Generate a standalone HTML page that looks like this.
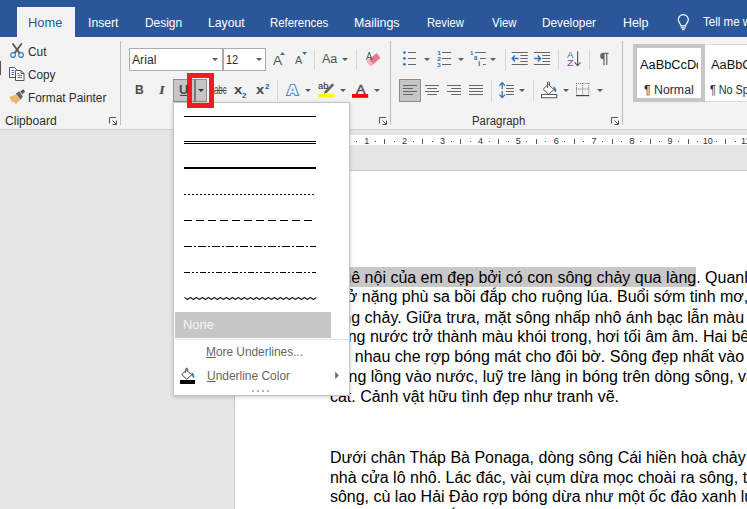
<!DOCTYPE html>
<html lang="vi"><head><meta charset="utf-8"><title>Word</title>
<style>
html,body{margin:0;padding:0}
body{width:747px;height:509px;overflow:hidden;position:relative;background:#e6e6e6;font-family:"Liberation Sans",sans-serif}
.a{position:absolute}
.t{position:absolute;white-space:nowrap;transform-origin:0 0;line-height:1}
.sep{position:absolute;width:1px;background:#d4d4d4}
.gsep{position:absolute;width:1px;background:#bdbdbd;top:41px;height:84px}
.doc{position:absolute;left:329.9px;white-space:nowrap;font-size:16px;line-height:20px;color:#000;height:20px}
svg{position:absolute;overflow:visible}
.arr{position:absolute;width:0;height:0;border-left:3px solid transparent;border-right:3px solid transparent;border-top:3.4px solid #5a5a5a;margin-left:-0.5px}
.rn{position:absolute;top:136.9px;width:20px;text-align:center;font-size:9px;line-height:9px;color:#333}
.rd{position:absolute;top:141px;width:1px;height:1px;background:#444}
.rt{position:absolute;top:139.2px;width:1px;height:4.5px;background:#555}
</style></head><body>

<!-- title / tab bar -->
<div class="a" style="left:0;top:0;width:747px;height:37px;background:#2b579a"></div>
<div class="a" style="left:17px;top:7px;width:58px;height:30px;background:#f3f3f3"></div>
<!-- ribbon -->
<div class="a" style="left:0;top:37px;width:747px;height:91.5px;background:#f3f3f3;border-bottom:1px solid #d0d0d0"></div>
<div class="a" style="left:0;top:61px;width:1px;height:14px;background:#555"></div>

<div class="gsep" style="left:120px"></div>
<div class="gsep" style="left:390px"></div>
<div class="gsep" style="left:622px"></div>

<!-- font boxes -->
<div class="a" style="left:129px;top:48px;width:93.5px;height:22.5px;background:#fff;border:1px solid #ababab;box-sizing:border-box"></div>
<div class="a" style="left:223.3px;top:48px;width:42.7px;height:22.5px;background:#fff;border:1px solid #ababab;box-sizing:border-box"></div>
<div class="arr" style="left:212.5px;top:58px"></div>
<div class="arr" style="left:256px;top:58px"></div>

<!-- U button -->
<div class="a" style="left:173.4px;top:79px;width:33.6px;height:23px;background:#c6c6c6;border:1px solid #8e8e8e;box-sizing:border-box"></div>
<div class="a" style="left:194.2px;top:79px;width:1.7px;height:23px;background:#7c7c7c"></div>
<div class="a" style="left:179.6px;top:95px;width:7.6px;height:1px;background:#444"></div>
<div class="arr" style="left:198.3px;top:89px;border-top-color:#333"></div>

<!-- row separators -->
<div class="sep" style="left:314px;top:49px;height:21px"></div>
<div class="sep" style="left:356px;top:49px;height:21px"></div>
<div class="sep" style="left:277px;top:80px;height:21px"></div>
<div class="sep" style="left:504.5px;top:49px;height:21px"></div>
<div class="sep" style="left:557.5px;top:49px;height:21px"></div>
<div class="sep" style="left:588.5px;top:49px;height:21px"></div>
<div class="sep" style="left:491px;top:80px;height:21px"></div>
<div class="sep" style="left:533px;top:80px;height:21px"></div>

<!-- small arrows -->
<div class="arr" style="left:342px;top:58px"></div>
<div class="arr" style="left:305px;top:89px"></div>
<div class="arr" style="left:340px;top:89px"></div>
<div class="arr" style="left:374.5px;top:89px"></div>
<div class="arr" style="left:424px;top:58px"></div>
<div class="arr" style="left:458px;top:58px"></div>
<div class="arr" style="left:490px;top:58px"></div>
<div class="arr" style="left:519px;top:89px"></div>
<div class="arr" style="left:563px;top:89px"></div>
<div class="arr" style="left:597px;top:89px"></div>

<!-- align-left button -->
<div class="a" style="left:399px;top:79px;width:22px;height:23px;background:#c6c6c6;border:1px solid #8c8c8c;box-sizing:border-box"></div>

<svg width="747" height="509" viewBox="0 0 747 509" style="left:0;top:0" fill="none">
<!-- lightbulb -->
<g stroke="#fff" stroke-width="1.2" fill="none">
<path d="M680.9 25.8 C680.9 23.4 678.3 22.6 678.3 19.7 A5 5 0 0 1 688.3 19.7 C688.3 22.6 685.7 23.4 685.7 25.8 Z"/>
<path d="M680.9 27.8 H685.7 M682 29.7 H684.6"/>
</g>
<!-- scissors -->
<g stroke="#5c5c5c" stroke-width="1.9" stroke-linecap="round"><path d="M12.9 44 L19.2 52.6 M21.3 44 L15 52.6"/></g>
<g stroke="#3b78c4" stroke-width="1.2"><circle cx="13.1" cy="55" r="2.3"/><circle cx="21.1" cy="55" r="2.3"/></g>
<!-- copy -->
<g stroke="#555" stroke-width="1" fill="#fff">
<path d="M9.5 67.5 H14.5 L16.5 69.5 V77.5 H9.5 Z"/>
<path d="M15.5 70.5 H21 L24 73.5 V80.5 H15.5 Z"/>
<path d="M21 70.5 V73.5 H24" fill="none"/>
</g>
<g stroke="#3b78c4" stroke-width="1"><path d="M11.5 70.5 H14 M11.5 72.5 H14 M11.5 74.5 H14 M17.5 73.5 H19.5 M17.5 75.5 H22 M17.5 77.5 H22"/></g>
<!-- format painter -->
<path d="M9.3 97.3 L16.2 94.2 L20.8 99.6 L16 104 L13.6 101.8 L12.6 102.6 Z" fill="#e9b86c"/>
<path d="M15.8 93.6 L19.4 91.2 L22.9 96.4 L20.6 99.4 Z" fill="#666"/>
<path d="M20.3 91.3 L23.4 89.3 L25.2 91.9 L22.2 94 Z" fill="#555"/>
<!-- dialog launchers -->
<g stroke="#555" stroke-width="1" fill="none">
<path id="dl" d="M109.5 123.5 V117.5 H116 M112.5 120.5 L116 124 M116.5 120.5 V124.5 H112.5"/>
<path d="M379.5 123.5 V117.5 H386 M382.5 120.5 L386 124 M386.5 120.5 V124.5 H382.5"/>
<path d="M611.5 123.5 V117.5 H618 M614.5 120.5 L618 124 M618.5 120.5 V124.5 H614.5"/>
</g>
<!-- grow/shrink triangles -->
<path d="M280 55 L282.5 52 L285 55 Z" fill="#2e75b6"/>
<path d="M302.2 52 L307 52 L304.6 55 Z" fill="#2e75b6"/>
<!-- eraser -->
<g transform="rotate(-40 373.5 59.5)">
<rect x="367" y="56.5" width="13" height="6.4" rx="1" fill="#e8798c"/>
<rect x="367" y="56.5" width="3.2" height="6.4" rx="1" fill="#f4b6c0"/>
</g>
<!-- highlighter -->
<path d="M333.2 84.3 L325.4 92.4" stroke="#666" stroke-width="2.7" stroke-linecap="butt"/>
<path d="M325.6 90.6 L323.6 93.8 L327.2 92.6 Z" fill="#555"/>
<rect x="318" y="94" width="16.2" height="3.8" fill="#ffff00"/>
<!-- font color bar -->
<rect x="352" y="94" width="16.2" height="3.8" fill="#ff0000"/>
<!-- bullets -->
<g fill="#2e75b6"><circle cx="404.4" cy="52.5" r="1.35"/><circle cx="404.4" cy="58.4" r="1.35"/><circle cx="404.4" cy="64.3" r="1.35"/></g>
<g stroke="#666" stroke-width="1"><path d="M408 52.5 H416 M408 58.5 H416 M408 64.5 H416"/>
<!-- numbering lines -->
<path d="M442 52.5 H451.2 M442 58.5 H451.2 M442 64.5 H451.2"/>
<!-- multilevel lines -->
<path d="M475.2 52.5 H485.8 M480 58.5 H485.8 M483 64.5 H485.8"/>
<!-- indent lines -->
<path d="M511.7 52.5 H527.8 M520.3 55.5 H527.8 M520.3 58.5 H527.8 M520.3 61.5 H527.8 M511.7 64.5 H527.8"/>
<path d="M533.9 52.5 H550 M542.3 55.5 H550 M542.3 58.5 H550 M542.3 61.5 H550 M533.9 64.5 H550"/>
<!-- align icons -->
<path d="M403 85.5 H417 M403 88.5 H413 M403 91.5 H417 M403 94.5 H413"/>
<path d="M425 85.5 H439 M427.2 88.5 H436.9 M425 91.5 H439 M427.2 94.5 H436.9"/>
<path d="M447 85.5 H461 M451.2 88.5 H461 M447 91.5 H461 M451.2 94.5 H461"/>
<path d="M469 85.5 H483 M469 88.5 H483 M469 91.5 H483 M469 94.5 H483"/>
<!-- line spacing lines -->
<path d="M506 85.5 H514 M506 88.5 H514 M506 91.5 H514 M506 94.5 H514"/>
</g>
<!-- indent arrows -->
<g stroke="#2e75b6" stroke-width="1.4" fill="none"><path d="M512.2 58.5 H518.6 M515 55.6 L512.2 58.5 L515 61.4"/><path d="M534.2 58.5 H540.6 M537.8 55.6 L540.6 58.5 L537.8 61.4"/></g>
<!-- sort arrow -->
<g stroke="#555" stroke-width="1.1" fill="none"><path d="M577.6 51.2 V65.4 M574.6 62.4 L577.6 65.6 L580.6 62.4"/></g>
<!-- line spacing arrows -->
<g stroke="#2e75b6" stroke-width="1.3" fill="none"><path d="M502.2 82.8 V89.2 M502.2 91 V97.4 M499.4 85.6 L502.2 82.6 L505 85.6 M499.4 94.6 L502.2 97.6 L505 94.6"/></g>
<!-- shading bucket -->
<g stroke="#555" stroke-width="1" fill="#fff">
<path d="M548.3 84.2 L553.8 89.7 L548.6 94.2 L543.2 89.2 Z"/>
<path d="M547.5 88 V83 Q547.5 82 548.5 82 Q549.5 82 549.5 83 V85.4" fill="none"/>
<rect x="541.5" y="94.5" width="15.3" height="3.2"/>
</g>
<path d="M553.2 86.3 Q556.6 87.5 556.3 91.8 Q555 92.6 554.2 90.2 Z" fill="#2e75b6"/>
<!-- borders -->
<g stroke="#666" stroke-width="1" stroke-dasharray="1 1.15">
<path d="M576 83.5 H589.2 M576 89 H589.2 M576.5 83 V94.5 M582.6 83 V94.5 M588.7 83 V94.5"/>
</g>
<path d="M576 95.6 H589.2" stroke="#444" stroke-width="1.2"/>
<!-- pilcrow -->
<g><path d="M603.5 52.8 H608.6 V54 H607.4 V64.9 H606.2 V54 H604.6 V64.9 H603.4 V59.4 A3.3 3.3 0 0 1 603.5 52.8 Z" fill="#666"/></g>
</svg>


<!-- styles gallery -->
<div class="a" style="left:632.5px;top:44px;width:120px;height:58px;background:#fff;border:1px solid #dcdcdc;box-sizing:border-box"></div>
<div class="a" style="left:632.5px;top:44px;width:72px;height:58px;border:4.6px solid #c6c6c6;box-sizing:border-box;background:#fff"></div>
<div class="a" style="left:637px;top:48px;width:60.7px;height:50px;overflow:hidden"><span class="t" style="left:2.5px;top:10.6px;font-size:12px;color:#111;transform:scaleX(1.065)">AaBbCcDdEe</span></div>
<span class="t" style="left:711px;top:58.6px;font-size:12px;color:#111;transform:scaleX(1.065)">AaBbCcDdEe</span>

<!-- ruler -->
<div class="a" style="left:180px;top:135px;width:570px;height:10px;background:#fff"></div>
<div class="rd" style="left:356px"></div>
<span class="rn" style="left:356.7px">1</span>
<div class="rd" style="left:375px"></div>
<div class="rt" style="left:384px"></div>
<div class="rd" style="left:394px"></div>
<span class="rn" style="left:394.6px">2</span>
<div class="rd" style="left:413px"></div>
<div class="rt" style="left:422px"></div>
<div class="rd" style="left:432px"></div>
<span class="rn" style="left:432.5px">3</span>
<div class="rd" style="left:451px"></div>
<div class="rt" style="left:460px"></div>
<div class="rd" style="left:470px"></div>
<span class="rn" style="left:470.4px">4</span>
<div class="rd" style="left:489px"></div>
<div class="rt" style="left:498px"></div>
<div class="rd" style="left:508px"></div>
<span class="rn" style="left:508.3px">5</span>
<div class="rd" style="left:526px"></div>
<div class="rt" style="left:536px"></div>
<div class="rd" style="left:545px"></div>
<span class="rn" style="left:546.2px">6</span>
<div class="rd" style="left:564px"></div>
<div class="rt" style="left:574px"></div>
<div class="rd" style="left:583px"></div>
<span class="rn" style="left:584.1px">7</span>
<div class="rd" style="left:602px"></div>
<div class="rt" style="left:612px"></div>
<div class="rd" style="left:621px"></div>
<span class="rn" style="left:622.0px">8</span>
<div class="rd" style="left:640px"></div>
<div class="rt" style="left:650px"></div>
<div class="rd" style="left:659px"></div>
<span class="rn" style="left:659.9px">9</span>
<div class="rd" style="left:678px"></div>
<div class="rt" style="left:688px"></div>
<div class="rd" style="left:697px"></div>
<span class="rn" style="left:697.8px">10</span>
<div class="rd" style="left:716px"></div>
<div class="rt" style="left:725px"></div>
<div class="rd" style="left:735px"></div>
<span class="rn" style="left:735.7px">11</span>

<!-- page -->
<div class="a" style="left:234px;top:170.2px;width:520px;height:345px;background:#fff;border:1px solid #c6c6c6;box-sizing:border-box"></div>
<div class="a" style="left:330px;top:267.4px;width:366px;height:19.2px;background:#c8c8c8"></div>
<div class="doc" style="top:267.5px">Quê nội của em đẹp bởi có con sông chảy qua làng. Quanh năm cần mẫn, dòng sông</div>
<div class="doc" style="top:287.3px">chở nặng phù sa bồi đắp cho ruộng lúa. Buổi sớm tinh mơ, dòng nước mờ mờ phẳng</div>
<div class="doc" style="top:307.6px">lặng chảy. Giữa trưa, mặt sông nhấp nhô ánh bạc lẫn màu xanh biếc của cây cối. Chiều tà,</div>
<div class="doc" style="top:327px">dòng nước trở thành màu khói trong, hơi tối âm âm. Hai bên bờ sông, luỹ tre làng nối</div>
<div class="doc" style="top:346.8px">vai nhau che rợp bóng mát cho đôi bờ. Sông đẹp nhất vào những đêm trăng. Bóng</div>
<div class="doc" style="top:366.7px">trăng lồng vào nước, luỹ tre làng in bóng trên dòng sông, và những bãi</div>
<div class="doc" style="top:386.5px">cát. Cảnh vật hữu tình đẹp như tranh vẽ.</div>
<div class="doc" style="top:447.7px">Dưới chân Tháp Bà Ponaga, dòng sông Cái hiền hoà chảy ra biển. Hai bên bờ sông,</div>
<div class="doc" style="top:467.5px">nhà cửa lô nhô. Lác đác, vài cụm dừa mọc choài ra sông, tạo nên một cảnh sắc</div>
<div class="doc" style="top:487.3px">sông, cù lao Hải Đảo rợp bóng dừa như một ốc đảo xanh lục. Gần cửa biển,</div>
<div class="doc" style="top:507.2px">cầu Xóm Bóng bắc ngang sông nối liền hai bờ, xa xa là những cồn cát trắng.</div>

<!-- dropdown panel -->
<div class="a" style="left:173px;top:102px;width:177.3px;height:294.3px;background:#fff;border:1px solid #c6c6c6;box-sizing:border-box;box-shadow:0 1px 4px rgba(0,0,0,0.2)"></div>
<div class="a" style="left:175px;top:312px;width:156px;height:26.3px;background:#c6c6c6"></div>
<div class="a" style="left:175px;top:338.5px;width:174px;height:1px;background:#e1e1e1"></div>
<svg width="180" height="300" viewBox="0 0 180 300" style="left:173px;top:102px" fill="none" shape-rendering="crispEdges">
<path d="M11 14.5 H143" stroke="#000" stroke-width="1"/>
<path d="M11 39.5 H143 M11 41.5 H143" stroke="#000" stroke-width="1"/>
<path d="M11 66 H143" stroke="#000" stroke-width="2"/>
<path d="M11 92.5 H142" stroke="#000" stroke-width="1" stroke-dasharray="2 2"/>
<path d="M11 118.5 H139" stroke="#000" stroke-width="1" stroke-dasharray="8 4"/>
<path d="M11 144.5 H143" stroke="#000" stroke-width="1" stroke-dasharray="8 2 2 2"/>
<path d="M11 170.5 H143" stroke="#000" stroke-width="1" stroke-dasharray="6 2 2 2 2 2"/>
<path d="M11.4 195.39999999999998 L14.4 197.5 L17.4 195.5 L20.4 197.5 L23.4 195.5 L26.4 197.5 L29.4 195.5 L32.4 197.5 L35.4 195.5 L38.4 197.5 L41.4 195.5 L44.4 197.5 L47.4 195.5 L50.4 197.5 L53.4 195.5 L56.4 197.5 L59.4 195.5 L62.4 197.5 L65.4 195.5 L68.4 197.5 L71.4 195.5 L74.4 197.5 L77.4 195.5 L80.4 197.5 L83.4 195.5 L86.4 197.5 L89.4 195.5 L92.4 197.5 L95.4 195.5 L98.4 197.5 L101.4 195.5 L104.4 197.5 L107.4 195.5 L110.4 197.5 L113.4 195.5 L116.4 197.5 L119.4 195.5 L122.4 197.5 L125.4 195.5 L128.4 197.5 L131.4 195.5 L134.4 197.5 L137.4 195.5 L140.4 197.5 L143.4 195.5" stroke="#1a1a1a" stroke-width="1.15" stroke-linejoin="round" shape-rendering="auto"/>
<g shape-rendering="auto" stroke="#444" stroke-width="1" fill="#fff"><path d="M13.49999999999999 268.0 L18.69999999999999 273.0 L13.699999999999989 277.2 L8.699999999999989 272.59999999999997 Z"/><path d="M12.699999999999989 271.2 V267.2 Q12.699999999999989 266.2 13.699999999999989 266.2 Q14.699999999999989 266.2 14.699999999999989 267.2 V269.2" fill="none"/></g>
<path shape-rendering="auto" d="M18.29999999999999 270.2 Q21.69999999999999 271.59999999999997 21.29999999999999 275.8 Q19.899999999999988 276.4 19.29999999999999 274.0 Z" fill="#2e75b6"/>
<rect x="6.699999999999989" y="278.2" width="15.5" height="3.5" fill="#000"/>
<path shape-rendering="auto" d="M162.2 269.8 L165.8 273.4 L162.2 277 Z" fill="#666"/>
<rect x="79" y="287.5" width="2" height="2" fill="#aab9cf"/>
<rect x="84" y="287.5" width="2" height="2" fill="#aab9cf"/>
<rect x="89" y="287.5" width="2" height="2" fill="#aab9cf"/>
<rect x="94" y="287.5" width="2" height="2" fill="#aab9cf"/>
</svg>

<!-- red highlight box -->
<div class="a" style="left:187.1px;top:73.1px;width:26.7px;height:34.7px;border:5px solid #ed1c24;box-sizing:border-box"></div>

<span class="t g" style="left:28.3px;top:16.1px;font-size:13px;color:#2b579a;transform:scaleX(0.989);">Home</span>
<span class="t g" style="left:87.5px;top:16.1px;font-size:13px;color:#fff;transform:scaleX(0.938);">Insert</span>
<span class="t g" style="left:144.5px;top:16.1px;font-size:13px;color:#fff;transform:scaleX(0.916);">Design</span>
<span class="t g" style="left:207.5px;top:16.1px;font-size:13px;color:#fff;transform:scaleX(0.942);">Layout</span>
<span class="t g" style="left:270.4px;top:16.1px;font-size:13px;color:#fff;transform:scaleX(0.875);">References</span>
<span class="t g" style="left:354.4px;top:16.1px;font-size:13px;color:#fff;transform:scaleX(0.956);">Mailings</span>
<span class="t g" style="left:426.5px;top:16.1px;font-size:13px;color:#fff;transform:scaleX(0.865);">Review</span>
<span class="t g" style="left:491.7px;top:16.1px;font-size:13px;color:#fff;transform:scaleX(0.875);">View</span>
<span class="t g" style="left:542.3px;top:16.1px;font-size:13px;color:#fff;transform:scaleX(0.910);">Developer</span>
<span class="t g" style="left:622.5px;top:16.1px;font-size:13px;color:#fff;transform:scaleX(0.954);">Help</span>
<span class="t g" style="left:702.6px;top:15.0px;font-size:13px;color:#fff;transform:scaleX(0.890);">Tell me what you want to do</span>
<span class="t g" style="left:28.1px;top:45.8px;font-size:12px;color:#2d2d2d;transform:scaleX(0.992);">Cut</span>
<span class="t g" style="left:28.1px;top:69.1px;font-size:12px;color:#2d2d2d;transform:scaleX(0.982);">Copy</span>
<span class="t g" style="left:27.6px;top:91.6px;font-size:12px;color:#2d2d2d;transform:scaleX(0.988);">Format Painter</span>
<span class="t g" style="left:4.5px;top:114.8px;font-size:12px;color:#2d2d2d;transform:scaleX(1.007);">Clipboard</span>
<span class="t g" style="left:471.6px;top:114.8px;font-size:12px;color:#2d2d2d;transform:scaleX(0.951);">Paragraph</span>
<span class="t g" style="left:132.0px;top:53.5px;font-size:12px;color:#2d2d2d;transform:scaleX(1.015);">Arial</span>
<span class="t g" style="left:226.3px;top:53.5px;font-size:12px;color:#2d2d2d;transform:scaleX(0.917);">12</span>
<span class="t g" style="left:135.0px;top:83.5px;font-size:12.5px;color:#4a4a4a;font-weight:bold;transform:scaleX(0.968);">B</span>
<span class="t g" style="left:158.6px;top:83.1px;font-size:13px;color:#4a4a4a;font-weight:bold;font-style:italic;font-family:'Liberation Serif',serif;transform:scaleX(1.150);">I</span>
<span class="t g" style="left:178.8px;top:83.5px;font-size:12.5px;color:#4a4a4a;font-weight:bold;transform:scaleX(1.040);">U</span>
<span class="t g" style="left:213.6px;top:83.7px;font-size:12px;color:#4a4a4a;text-decoration:line-through;transform:scaleX(0.654);">abc</span>
<span class="t g" style="left:234.2px;top:82.8px;font-size:13.5px;color:#4a4a4a;font-weight:bold;transform:scaleX(1.093);">x</span>
<span class="t g" style="left:242.3px;top:91.6px;font-size:7px;color:#2b579a;font-weight:bold;transform:scaleX(1.114);">2</span>
<span class="t g" style="left:256.0px;top:82.8px;font-size:13.5px;color:#4a4a4a;font-weight:bold;transform:scaleX(1.093);">x</span>
<span class="t g" style="left:264.5px;top:83.1px;font-size:7px;color:#2b579a;font-weight:bold;transform:scaleX(1.114);">2</span>
<span class="t g" style="left:272.5px;top:53.6px;font-size:13.5px;color:#555;transform:scaleX(1.011);">A</span>
<span class="t g" style="left:295.3px;top:56.3px;font-size:10.3px;color:#555;transform:scaleX(1.043);">A</span>
<span class="t g" style="left:322.2px;top:53.0px;font-size:12.3px;color:#555;transform:scaleX(1.020);">Aa</span>
<span class="t g" style="left:643.5px;top:83.9px;font-size:12px;color:#2d2d2d;transform:scaleX(1.026);">¶ Normal</span>
<span class="t g" style="left:710.0px;top:83.9px;font-size:12px;color:#2d2d2d;transform:scaleX(0.900);">¶ No Spacing</span>
<span class="t g" style="left:182.9px;top:319.4px;font-size:12px;color:#f6f6f6;transform:scaleX(1.075);">None</span>
<span class="t g" style="left:206.4px;top:346.1px;font-size:12px;color:#666;transform:scaleX(0.989);"><u>M</u>ore Underlines...</span>
<span class="t g" style="left:206.7px;top:369.5px;font-size:12px;color:#666;transform:scaleX(0.996);"><u>U</u>nderline Color</span>
<span class="t g" style="left:436.7px;top:49.9px;font-size:6px;color:#2e75b6;font-weight:bold;transform:scaleX(1.200);">1</span>
<span class="t g" style="left:436.7px;top:55.9px;font-size:6px;color:#2e75b6;font-weight:bold;transform:scaleX(1.200);">2</span>
<span class="t g" style="left:437.0px;top:61.8px;font-size:6px;color:#2e75b6;font-weight:bold;transform:scaleX(1.108);">3</span>
<span class="t g" style="left:470.1px;top:49.9px;font-size:6px;color:#2e75b6;font-weight:bold;transform:scaleX(1.000);">1</span>
<span class="t g" style="left:474.2px;top:55.3px;font-size:6.5px;color:#2e75b6;font-weight:bold;transform:scaleX(0.907);">a</span>
<span class="t g" style="left:478.3px;top:61.4px;font-size:6.5px;color:#2e75b6;font-weight:bold;transform:scaleX(1.280);">i</span>
<span class="t g" style="left:566.8px;top:50.8px;font-size:8.5px;color:#2e75b6;transform:scaleX(1.130);">A</span>
<span class="t g" style="left:566.7px;top:58.8px;font-size:8.5px;color:#8e44ad;transform:scaleX(1.263);">Z</span>
<span class="t g" style="left:317.7px;top:82.3px;font-size:8.5px;color:#222;transform:scaleX(1.111);">ab</span>
<span class="t g" style="left:287.4px;top:82.5px;font-size:14px;color:#fff;font-weight:bold;-webkit-text-stroke:2.2px #3a7cc4;paint-order:stroke fill;text-shadow:0 0 2px #9dc3e6;transform:scaleX(1.084);">A</span>
<span class="t g" style="left:355.6px;top:82.6px;font-size:13px;color:#555;-webkit-text-stroke:0.5px #555;transform:scaleX(1.097);">A</span>
<span class="t g" style="left:366.0px;top:51.8px;font-size:10px;color:#555;transform:scaleX(0.948);">A</span>
</body></html>
